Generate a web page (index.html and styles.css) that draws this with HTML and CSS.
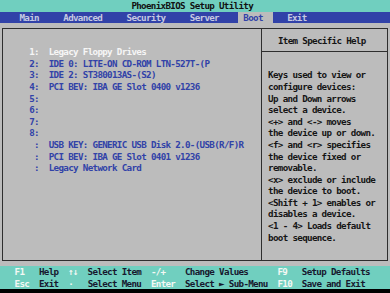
FILE: index.html
```html
<!DOCTYPE html>
<html lang="en">
<head>
    <meta charset="UTF-8">
    <title>PhoenixBIOS Setup Utility - Boot</title>
    <link rel="stylesheet" href="styles.css">
</head>
<body>
<div class="screen">
    <div class="line title">                           PhoenixBIOS Setup Utility</div>
    <div class="line menu">    Main     Advanced     Security     Server    <span class="active"> Boot  </span>   Exit</div>

    <div class="body">
        <div class="frame">
            <ul class="order">
                <li class="line current">1:  Legacy Floppy Drives</li>
                <li class="line">2:  IDE 0: LITE-ON CD-ROM LTN-527T-(P</li>
                <li class="line">3:  IDE 2: ST380013AS-(S2)</li>
                <li class="line">4:  PCI BEV: IBA GE Slot 0400 v1236</li>
                <li class="line">5:</li>
                <li class="line">6:</li>
                <li class="line">7:</li>
                <li class="line">8:</li>
                <li class="line"> :  USB KEY: GENERIC USB Disk 2.0-(USB(R/F)R</li>
                <li class="line"> :  PCI BEV: IBA GE Slot 0401 v1236</li>
                <li class="line"> :  Legacy Network Card</li>
            </ul>
            <div class="help">
                <div class="line help-title">Item Specific Help</div>
                <div class="help-text">
                    <div class="line">Keys used to view or</div>
                    <div class="line">configure devices:</div>
                    <div class="line">Up and Down arrows</div>
                    <div class="line">select a device.</div>
                    <div class="line">&lt;+&gt; and &lt;-&gt; moves</div>
                    <div class="line">the device up or down.</div>
                    <div class="line">&lt;f&gt; and &lt;r&gt; specifies</div>
                    <div class="line">the device fixed or</div>
                    <div class="line">removable.</div>
                    <div class="line">&lt;x&gt; exclude or include</div>
                    <div class="line">the device to boot.</div>
                    <div class="line">&lt;Shift + 1&gt; enables or</div>
                    <div class="line">disables a device.</div>
                    <div class="line">&lt;1 - 4&gt; Loads default</div>
                    <div class="line">boot sequence.</div>
                </div>
            </div>
        </div>
    </div>

    <div class="keys">
        <div class="line">   <span class="key">F1</span>   Help  <span class="key">↑↓</span>  Select Item  <span class="key">-/+</span>    Change Values      <span class="key">F9</span>   Setup Defaults</div>
        <div class="line">   <span class="key">Esc</span>  Exit  <span class="key">·</span>   Select Menu  <span class="key">Enter</span>  Select ► Sub-Menu  <span class="key">F10</span>  Save and Exit</div>
    </div>
</div>
</body>
</html>
```

FILE: styles.css
```css
* {
    margin: 0;
    padding: 0;
    box-sizing: border-box;
}

ul, ol {
    list-style: none;
}

body {
    width: 390px;
    height: 293px;
    overflow: hidden;
    background-color: #000;
    font-family: "DejaVu Sans Mono", "Liberation Mono", monospace;
    font-size: 9.2px;
    font-weight: bold;
    letter-spacing: -0.665px;
}

.screen {
    display: flex;
    flex-direction: column;
    width: 390px;
    height: 293px;
}

/* one text row of the 80x25 screen */
.line {
    height: 11.58px;
    line-height: 11.58px;
    white-space: pre;
}

.title {
    background-color: #70cfbf;
    color: #111;
}

.menu {
    background-color: #3142a8;
    color: #c6c9e2;
}

.menu .active {
    background-color: #bcbcbc;
    color: #3142a8;
}

.body {
    display: flex;
    height: 243.18px;
    padding: 5.3px 2px;
    background-color: #bcbcbc;
}

.frame {
    flex: 1;
    display: flex;
    border: 1px solid #2e2e2e;
}

.order {
    width: 259px;
    padding: 16.86px 0 0 26.25px;
    border-right: 1px solid #2e2e2e;
    color: #3142a8;
}

.order .current {
    color: #f6f6f6;
}

.help {
    flex: 1;
    color: #151515;
}

.help-title {
    height: auto;
    padding: 5.28px 0 4.7px 16px;
    border-bottom: 1px solid #2e2e2e;
}

.help-text {
    padding: 17.48px 0 0 6.1px;
}

.keys {
    background-color: #70cfbf;
    color: #17182e;
}

.keys .key {
    color: #f4f8f4;
}
```
